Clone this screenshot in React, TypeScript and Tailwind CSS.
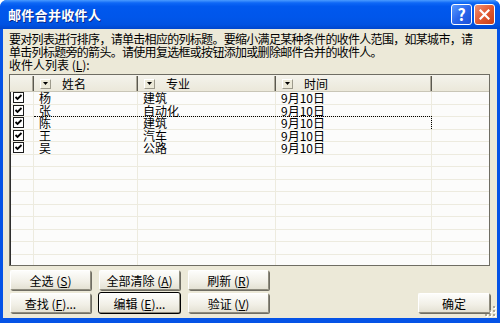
import React from 'react';

const rows = [
  { name: '杨', major: '建筑', time: '9月10日' },
  { name: '张', major: '自动化', time: '9月10日' },
  { name: '陈', major: '建筑', time: '9月10日', focus: true },
  { name: '王', major: '汽车', time: '9月10日' },
  { name: '吴', major: '公路', time: '9月10日' },
];

function CheckBox() {
  return (
    <svg width="11" height="11" viewBox="0 0 11 11" className="block">
      <rect x="0.5" y="0.5" width="10" height="10" fill="#fff" stroke="#1c1c1c" />
      <path d="M2.5 5 L4.5 7 L8.5 3" fill="none" stroke="#000" strokeWidth="1.8" />
    </svg>
  );
}

function DropArrow() {
  return (
    <span className="flex h-[10px] w-[11px] shrink-0 items-center justify-center border border-t-white border-l-white border-r-[#9d9a8c] border-b-[#9d9a8c] bg-[#ECE9D8]">
      <svg width="5" height="3" viewBox="0 0 5 3" className="block">
        <path d="M0 0 H5 L2.5 3 Z" fill="#000" />
      </svg>
    </span>
  );
}

function HeaderCell({ w, label, first }: { w: string; label?: string; first?: boolean }) {
  return (
    <div
      className={`${w} flex h-full items-center border-r border-[#5a584f] shadow-[inset_-1px_0_0_#aca899] ${
        first ? '' : 'pl-[6px]'
      }`}
    >
      {label && (
        <>
          <DropArrow />
          <span className="ml-[11px]">{label}</span>
        </>
      )}
    </div>
  );
}

function Btn({
  children,
  w = 'w-[81px]',
  active,
}: {
  children: React.ReactNode;
  w?: string;
  active?: boolean;
}) {
  return (
    <div
      className={`${w} flex h-[20px] items-center justify-center rounded-[2px] border border-t-white border-l-white border-r-[#8e8b7d] border-b-[#8e8b7d] bg-[linear-gradient(to_bottom,#FDFDFB,#F1EFE6_60%,#E4E1D3)] shadow-[1px_1px_0_#6f6d63] ${
        active ? 'outline outline-black' : ''
      }`}
    >
      {children}
    </div>
  );
}

export default function App() {
  return (
    <div className="flex h-[323px] w-[500px] flex-col overflow-hidden rounded-t-[7px] bg-[#0553E6] font-['Noto_Sans_CJK_SC','Liberation_Sans',sans-serif] text-[12px] leading-[13px] text-black">
      {/* title bar */}
      <div className="flex h-[29px] shrink-0 items-center bg-[linear-gradient(to_bottom,#4A9BFF_0%,#0E68F6_10%,#0058EE_22%,#0056EA_60%,#0052E2_85%,#0046CC_100%)] pl-[8px] pr-[5px]">
        <span className="flex-1 text-[13px] font-bold tracking-[0.3px] text-white [text-shadow:1px_1px_0_#0B2A8A]">
          邮件合并收件人
        </span>
        <div className="mr-[1px] flex h-[21px] w-[21px] items-center justify-center rounded-[3px] border border-white bg-[linear-gradient(135deg,#5A9BFF,#2A66EC_50%,#1A4FD8)] text-[16px] font-bold text-white">
          ?
        </div>
        <div className="ml-[1px] flex h-[21px] w-[21px] items-center justify-center rounded-[3px] border border-white bg-[linear-gradient(135deg,#F09276,#E25A32_50%,#C73E17)]">
          <svg width="11" height="11" viewBox="0 0 11 11" className="block">
            <path d="M1.5 1.5 L9.5 9.5 M9.5 1.5 L1.5 9.5" stroke="#fff" strokeWidth="2.2" strokeLinecap="square" />
          </svg>
        </div>
      </div>

      {/* body */}
      <div className="relative mx-[3px] mb-[5px] flex flex-1 flex-col bg-[#ECE9D8] pl-[6px] pr-[7px] pt-[3px]">
        <p className="whitespace-nowrap tracking-[-0.7px]">
          要对列表进行排序，请单击相应的列标题。要缩小满足某种条件的收件人范围，如某城市，请
          <br />
          单击列标题旁的箭头。请使用复选框或按钮添加或删除邮件合并的收件人。
        </p>
        <div>
          收件人列表 (<span className="underline">L</span>):
        </div>

        {/* list */}
        <div className="mt-[3px] flex h-[192px] flex-col overflow-hidden border border-[#6f6d63] bg-[#FCFCFB] shadow-[inset_1px_1px_0_#2e2e2e]">
          <div className="flex h-[17px] shrink-0 border-b border-[#C9C6B7] bg-[linear-gradient(to_bottom,#F4F3EC,#EBE8DA)] pl-[1px] pt-[1px]">
            <HeaderCell w="w-[23px]" first />
            <HeaderCell w="w-[104px]" label="姓名" />
            <HeaderCell w="w-[138px]" label="专业" />
            <HeaderCell w="w-[156px]" label="时间" />
            <div className="flex-1" />
          </div>
          <div className="flex flex-col pl-[1px]">
            {Array.from({ length: 14 }).map((_, i) => {
              const r = rows[i];
              return (
                <div key={i} className="flex h-[12.5px] shrink-0 border-b border-[#EDEBDF] leading-[11.5px]">
                  <div className="flex w-[23px] items-center border-r border-[#EDEBDF] pl-[2px]">
                    {r && <CheckBox />}
                  </div>
                  <div className="relative flex">
                    {r?.focus && (
                      <span className="pointer-events-none absolute inset-x-0 -top-[1px] bottom-0 border-r border-t border-dotted border-black" />
                    )}
                    <div className="w-[104px] border-r border-[#EDEBDF] pl-[5px]">{r?.name}</div>
                    <div className="w-[138px] border-r border-[#EDEBDF] pl-[5px]">{r?.major}</div>
                    <div className="w-[156px] border-r border-[#EDEBDF] pl-[5px]">{r?.time}</div>
                  </div>
                  <div className="flex-1" />
                </div>
              );
            })}
          </div>
        </div>

        {/* buttons */}
        <div className="mt-[4px] flex gap-[8px] pl-[1px]">
          <Btn>
            全选 (<span className="underline">S</span>)
          </Btn>
          <Btn>
            全部清除 (<span className="underline">A</span>)
          </Btn>
          <Btn>
            刷新 (<span className="underline">R</span>)
          </Btn>
        </div>
        <div className="mt-[3px] flex gap-[8px] pl-[1px]">
          <Btn>
            查找 (<span className="underline">F</span>)...
          </Btn>
          <Btn active>
            编辑 (<span className="underline">E</span>)...
          </Btn>
          <Btn>
            验证 (<span className="underline">V</span>)
          </Btn>
          <div className="ml-auto">
            <Btn w="w-[72px]">确定</Btn>
          </div>
        </div>

        {/* resize grip */}
        <svg width="11" height="11" viewBox="0 0 11 11" className="absolute bottom-[1px] right-[1px]">
          {[
            [8, 0],
            [8, 4],
            [4, 4],
            [8, 8],
            [4, 8],
            [0, 8],
          ].map(([x, y], i) => (
            <g key={i}>
              <rect x={x + 1} y={y + 1} width="2" height="2" fill="#fff" />
              <rect x={x} y={y} width="2" height="2" fill="#A9A697" />
            </g>
          ))}
        </svg>
      </div>
    </div>
  );
}
